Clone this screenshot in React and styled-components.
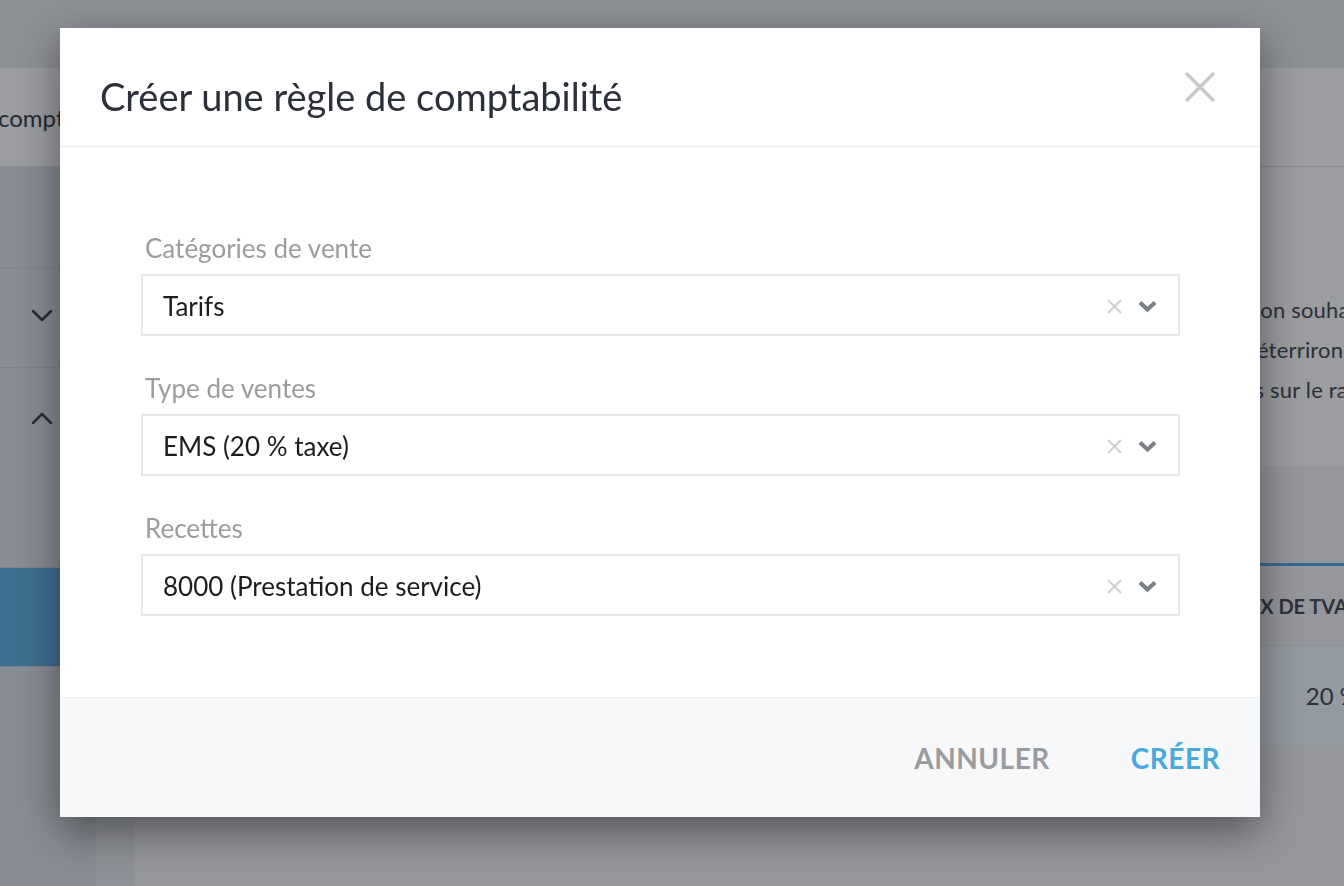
import React from 'react';
import styled, { createGlobalStyle } from 'styled-components';

const GlobalStyle = createGlobalStyle`
  html, body {
    margin: 0;
    padding: 0;
    overflow: hidden;
  }
  body {
    font-family: Lato, "Open Sans", "Liberation Sans", sans-serif;
    color: #333;
  }
  * {
    box-sizing: border-box;
  }
`;

const Page = styled.div`
  width: 100vw;
  height: 100vh;
  display: flex;
  flex-direction: column;
  background: #f0f1f4;
  overflow: hidden;
`;

const TopBar = styled.div`
  height: 68px;
  flex-shrink: 0;
  background: #e2e5e7;
`;

const PageHeader = styled.div`
  height: 99px;
  flex-shrink: 0;
  display: flex;
  align-items: center;
  background: #fcfcfd;
  border-bottom: 1px solid #d9dce1;
  font-size: 24px;
  color: #2e3440;
  white-space: nowrap;

  span {
    margin-left: -2px;
  }
`;

const Layout = styled.div`
  flex: 1;
  display: flex;
`;

const Sidebar = styled.div`
  width: 96px;
  flex-shrink: 0;
  display: flex;
  flex-direction: column;
  background: #dadee4;
`;

const SideRow = styled.div`
  height: ${(p) => p.$h}px;
  display: flex;
  justify-content: flex-end;
  align-items: flex-start;
  padding: ${(p) => p.$pad || 0}px 44px 0 0;
  border-bottom: 1px solid #c9ced6;
  background: ${(p) => (p.$active ? '#5aafe0' : 'transparent')};
  color: #333a45;
`;

const Rail = styled.div`
  width: 39px;
  flex-shrink: 0;
  background: #e4e7ea;
`;

const Main = styled.div`
  flex: 1;
  display: flex;
  flex-direction: column;
  min-width: 0;
`;

const InfoCard = styled.div`
  height: 299px;
  background: #fafbfc;
  padding-top: 123px;
  display: flex;
  flex-direction: column;
  align-items: flex-end;
  overflow: hidden;
  font-size: 22px;
  line-height: 40px;
  letter-spacing: 0.2px;
  color: #3a404a;
`;

const InfoLine = styled.p`
  margin: 0;
  white-space: nowrap;
  margin-right: ${(p) => p.$over}px;
`;

const TabLine = styled.div`
  margin-top: 97px;
  height: 3px;
  background: #4aa8dc;
`;

const TableRow = styled.div`
  height: ${(p) => p.$h}px;
  display: flex;
  align-items: center;
  justify-content: flex-end;
  background: ${(p) => p.$bg};
  border-bottom: 1px solid #e2e5ea;
  overflow: hidden;
  white-space: nowrap;
`;

const HeadCell = styled.div`
  font-size: 20px;
  font-weight: 700;
  text-transform: uppercase;
  color: #3e4550;
  margin-right: -4px;
`;

const ValueCell = styled.div`
  font-size: 24px;
  color: #3a404a;
  margin-right: -15px;
`;

const Overlay = styled.div`
  position: fixed;
  inset: 0;
  background: rgba(23, 27, 35, 0.42);
  display: flex;
  align-items: flex-start;
  padding: 28px 0 0 60px;
`;

const Modal = styled.div`
  width: 1200px;
  background: #fff;
  box-shadow: 0 14px 40px rgba(0, 0, 0, 0.45);
  display: flex;
  flex-direction: column;
`;

const ModalHeader = styled.div`
  height: 119px;
  display: flex;
  align-items: center;
  justify-content: space-between;
  padding: 0 44px 0 40px;
  border-bottom: 1px solid #ececec;
`;

const Title = styled.h2`
  margin: 18px 0 0 0;
  font-size: 38px;
  font-weight: 400;
  color: #2b3039;
`;

const CloseButton = styled.button`
  border: 0;
  background: none;
  padding: 0;
  width: 32px;
  height: 32px;
  display: flex;
  cursor: pointer;
`;

const ModalBody = styled.div`
  padding: 86px 80px 81px 81px;
  display: flex;
  flex-direction: column;
  gap: 37px;
`;

const Field = styled.div`
  display: flex;
  flex-direction: column;
  gap: 11px;
`;

const Label = styled.label`
  display: block;
  height: 30px;
  line-height: 30px;
  padding-left: 4px;
  font-size: 26px;
  color: #9b9c9f;
`;

const SelectBox = styled.div`
  height: 62px;
  display: flex;
  align-items: center;
  padding: 2px 21px 0 20px;
  border: 2px solid #e8e8e8;
  font-size: 26px;
  color: #1c1c1c;
`;

const SelectValue = styled.span`
  flex: 1;
`;

const Icons = styled.div`
  display: flex;
  align-items: center;
  gap: 16px;
`;

const ModalFooter = styled.div`
  height: 120px;
  display: flex;
  align-items: center;
  justify-content: flex-end;
  gap: 81px;
  padding-right: 40px;
  background: #f7f8fa;
  border-top: 1px solid #eeeff1;
`;

const FooterButton = styled.button`
  border: 0;
  background: none;
  padding: 0;
  font-family: inherit;
  font-size: 28px;
  font-weight: 700;
  letter-spacing: 0.5px;
  text-transform: uppercase;
  color: ${(p) => (p.$primary ? '#4aa8dc' : '#9a9b9f')};
  cursor: pointer;
`;

const Chevron = ({ up }) => (
  <svg width="20" height="12" viewBox="0 0 20 12" fill="none">
    <polyline
      points={up ? '1,11 10,2 19,11' : '1,1 10,10 19,1'}
      stroke="#333a45"
      strokeWidth="2.5"
      strokeLinecap="round"
      strokeLinejoin="round"
    />
  </svg>
);

const ClearIcon = () => (
  <svg width="15" height="15" viewBox="0 0 15 15">
    <path d="M1 1 L14 14 M14 1 L1 14" stroke="#cfcfcf" strokeWidth="2" />
  </svg>
);

const DropIcon = () => (
  <svg width="19" height="13" viewBox="0 0 19 13" fill="none">
    <polyline points="2,2.5 9.5,9.5 17,2.5" stroke="#7a7e85" strokeWidth="4" strokeLinejoin="miter" />
  </svg>
);

const CloseIcon = () => (
  <svg width="32" height="32" viewBox="0 0 32 32">
    <path d="M2 2 L30 30 M30 2 L2 30" stroke="#c8c8c8" strokeWidth="3.5" />
  </svg>
);

const fields = [
  { label: 'Catégories de vente', value: 'Tarifs' },
  { label: 'Type de ventes', value: 'EMS (20 % taxe)' },
  { label: 'Recettes', value: '8000 (Prestation de service)' },
];

export default function App() {
  return (
    <>
      <GlobalStyle />
      <Page>
        <TopBar />
        <PageHeader>
          <span>comptabilité</span>
        </PageHeader>
        <Layout>
          <Sidebar>
            <SideRow $h={101} />
            <SideRow $h={100} $pad={42}>
              <Chevron />
            </SideRow>
            <SideRow $h={200} $pad={44}>
              <Chevron up />
            </SideRow>
            <SideRow $h={99} $active />
          </Sidebar>
          <Rail />
          <Main>
            <InfoCard>
              <InfoLine $over={-48}>Choisissez le compte de ventes selon l'option souhaitée,</InfoLine>
              <InfoLine $over={-9}>puis les écritures que nous vous transmettrons, nous les déterrirons</InfoLine>
              <InfoLine $over={-58}>elles seront appliquées aux ventes et visibles sur le rapport</InfoLine>
            </InfoCard>
            <TabLine />
            <TableRow $h={80} $bg="transparent">
              <HeadCell>Taux de TVA</HeadCell>
            </TableRow>
            <TableRow $h={100} $bg="#eef6fb">
              <ValueCell>20 %</ValueCell>
            </TableRow>
          </Main>
        </Layout>
      </Page>

      <Overlay>
        <Modal>
          <ModalHeader>
            <Title>Créer une règle de comptabilité</Title>
            <CloseButton aria-label="Fermer">
              <CloseIcon />
            </CloseButton>
          </ModalHeader>
          <ModalBody>
            {fields.map((f) => (
              <Field key={f.label}>
                <Label>{f.label}</Label>
                <SelectBox>
                  <SelectValue>{f.value}</SelectValue>
                  <Icons>
                    <ClearIcon />
                    <DropIcon />
                  </Icons>
                </SelectBox>
              </Field>
            ))}
          </ModalBody>
          <ModalFooter>
            <FooterButton>Annuler</FooterButton>
            <FooterButton $primary>Créer</FooterButton>
          </ModalFooter>
        </Modal>
      </Overlay>
    </>
  );
}
